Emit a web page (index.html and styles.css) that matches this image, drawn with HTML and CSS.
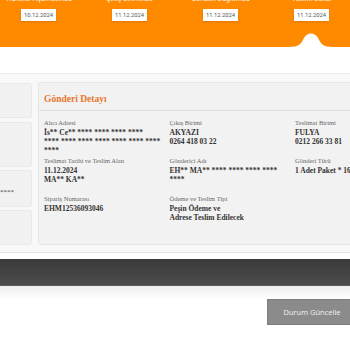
FILE: index.html
```html
<!DOCTYPE html>
<html lang="tr">
<head>
    <meta charset="UTF-8">
    <meta name="viewport" content="width=device-width, initial-scale=1.0">
    <title>Gönderi Takip</title>
    <link rel="stylesheet" href="styles.css">
</head>
<body>
    <div class="wrap">
        <!-- Tracking steps -->
        <header class="tracker">
            <div class="steps">
                <div class="step">
                    <div class="step-label">Transfer Aşamasında</div>
                    <div class="step-date">10.12.2024</div>
                </div>
                <div class="step">
                    <div class="step-label">Çıkış Biriminde</div>
                    <div class="step-date">11.12.2024</div>
                </div>
                <div class="step">
                    <div class="step-label">Gönderi Dağıtımda</div>
                    <div class="step-date">11.12.2024</div>
                </div>
                <div class="step">
                    <div class="step-label">Teslim Edildi</div>
                    <div class="step-date">11.12.2024</div>
                </div>
            </div>
            <svg class="bump" width="44" height="15" viewBox="0 0 44 15">
                <path d="M0 15 C10 15 12 12 15 6 C18 0 26 0 29 6 C32 12 34 15 44 15 Z" fill="#ffffff"/>
            </svg>
        </header>

        <div class="spacer"></div>

        <!-- Shipment content -->
        <section class="content">
            <div class="side">
                <div class="side-card h35"></div>
                <div class="side-card h45"></div>
                <div class="side-card h37"><span class="side-text">****</span></div>
                <div class="side-card h35"></div>
            </div>

            <div class="detail-card">
                <h2 class="detail-title">Gönderi Detayı</h2>
                <div class="fields">
                    <div class="field">
                        <div class="field-label">Alıcı Adresi</div>
                        <div class="field-value">İs** Ce** **** **** **** ****<br>**** **** **** **** **** **** ****<br>****</div>
                    </div>
                    <div class="field">
                        <div class="field-label">Çıkış Birimi</div>
                        <div class="field-value">AKYAZI<br>0264 418 03 22</div>
                    </div>
                    <div class="field">
                        <div class="field-label">Teslimat Birimi</div>
                        <div class="field-value">FULYA<br>0212 266 33 81</div>
                    </div>

                    <div class="field">
                        <div class="field-label">Teslimat Tarihi ve Teslim Alan</div>
                        <div class="field-value">11.12.2024<br>MA** KA**</div>
                    </div>
                    <div class="field">
                        <div class="field-label">Gönderici Adı</div>
                        <div class="field-value">EH** MA** **** **** **** ****<br>****</div>
                    </div>
                    <div class="field">
                        <div class="field-label">Gönderi Türü</div>
                        <div class="field-value">1 Adet Paket * 16</div>
                    </div>

                    <div class="field">
                        <div class="field-label">Sipariş Numarası</div>
                        <div class="field-value">EHM12536093046</div>
                    </div>
                    <div class="field">
                        <div class="field-label">Ödeme ve Teslim Tipi</div>
                        <div class="field-value">Peşin Ödeme ve<br>Adrese Teslim Edilecek</div>
                    </div>
                    <div class="field"></div>
                </div>
            </div>
        </section>

        <div class="bar"></div>

        <div class="actions">
            <button class="update-btn">Durum Güncelle</button>
        </div>
    </div>
</body>
</html>
```

FILE: styles.css
```css
body {
    margin: 0;
    padding: 0;
    overflow: hidden;
    background-color: #ffffff;
    font-family: 'Roboto', 'Liberation Sans', sans-serif;
}

.wrap {
    width: 357px;
}

/* Orange tracker band */
.tracker {
    position: relative;
    width: 350px;
    height: 47px;
    background-color: #ff8a00;
    overflow: hidden;
}

.steps {
    display: grid;
    grid-template-columns: repeat(4, 91px);
    margin-left: -7px;
}

.step {
    display: flex;
    flex-direction: column;
    align-items: center;
}

.step-label {
    margin-top: -5px;
    font-size: 7px;
    line-height: 8px;
    color: #fff3e0;
    white-space: nowrap;
}

.step-date {
    margin-top: 6px;
    width: 35px;
    height: 12px;
    background-color: #ffffff;
    color: #555;
    font-size: 5.8px;
    line-height: 12px;
    text-align: center;
    box-shadow: 0 1px 2px rgba(0, 0, 0, 0.15);
}

.bump {
    position: absolute;
    left: 289px;
    bottom: 0;
    display: block;
}

.spacer {
    height: 26px;
}

/* Gray content area */
.content {
    display: flex;
    gap: 6px;
    padding: 8px 0 7px;
    background-color: #f8f8f8;
    border-top: 1px solid #ececec;
    border-bottom: 1px solid #e4e4e4;
}

.side {
    display: flex;
    flex-direction: column;
    gap: 3px;
    width: 32px;
    flex-shrink: 0;
    padding-top: 1px;
}

.side-card {
    background-color: #f1f1f1;
    border: 1px solid #e9e9e9;
    border-left: none;
    border-radius: 0 3px 3px 0;
    overflow: hidden;
    box-sizing: border-box;
}

.h35 { height: 35px; }
.h45 { height: 45px; margin-top: 1px; }
.h37 { height: 37px; }

.side-text {
    display: block;
    padding-top: 17px;
    font-family: 'Liberation Serif', serif;
    font-size: 7px;
    color: #444;
}

.detail-card {
    width: 400px;
    flex-shrink: 0;
    height: 163px;
    box-sizing: border-box;
    background-color: #f2f2f2;
    border: 1px solid #e6e6e6;
    border-radius: 3px;
    font-family: 'Liberation Serif', serif;
}

.detail-title {
    margin: 0;
    padding: 10px 5px 5px;
    font-size: 9.5px;
    line-height: 12px;
    font-weight: bold;
    color: #e8772e;
    border-bottom: 1px solid #e0e0e0;
}

.fields {
    display: grid;
    grid-template-columns: repeat(3, 125.5px);
    grid-auto-rows: 38px;
    padding: 7px 5px 0;
}

.field {
    padding-right: 6px;
    white-space: nowrap;
}

.field-label {
    font-size: 6.5px;
    line-height: 9.5px;
    color: #666;
}

.field-value {
    font-size: 7.5px;
    line-height: 9.3px;
    font-weight: bold;
    color: #333;
}

/* Dark bar */
.bar {
    margin-top: 6px;
    height: 27px;
    background: linear-gradient(#3a3a3a, #4c4c4c);
    border-bottom: 1px solid #5a5a5a;
    box-sizing: border-box;
}

.actions {
    display: flex;
    justify-content: flex-end;
    padding-top: 13px;
    background: linear-gradient(#efefef, #ffffff 14px);
    height: 60px;
}

.update-btn {
    width: 90px;
    height: 26px;
    background-color: #8b8b8b;
    border: 1px solid #7e7e7e;
    color: #f2f2f2;
    font-family: 'Open Sans', 'Liberation Sans', sans-serif;
    font-size: 7.5px;
    cursor: pointer;
}
```
